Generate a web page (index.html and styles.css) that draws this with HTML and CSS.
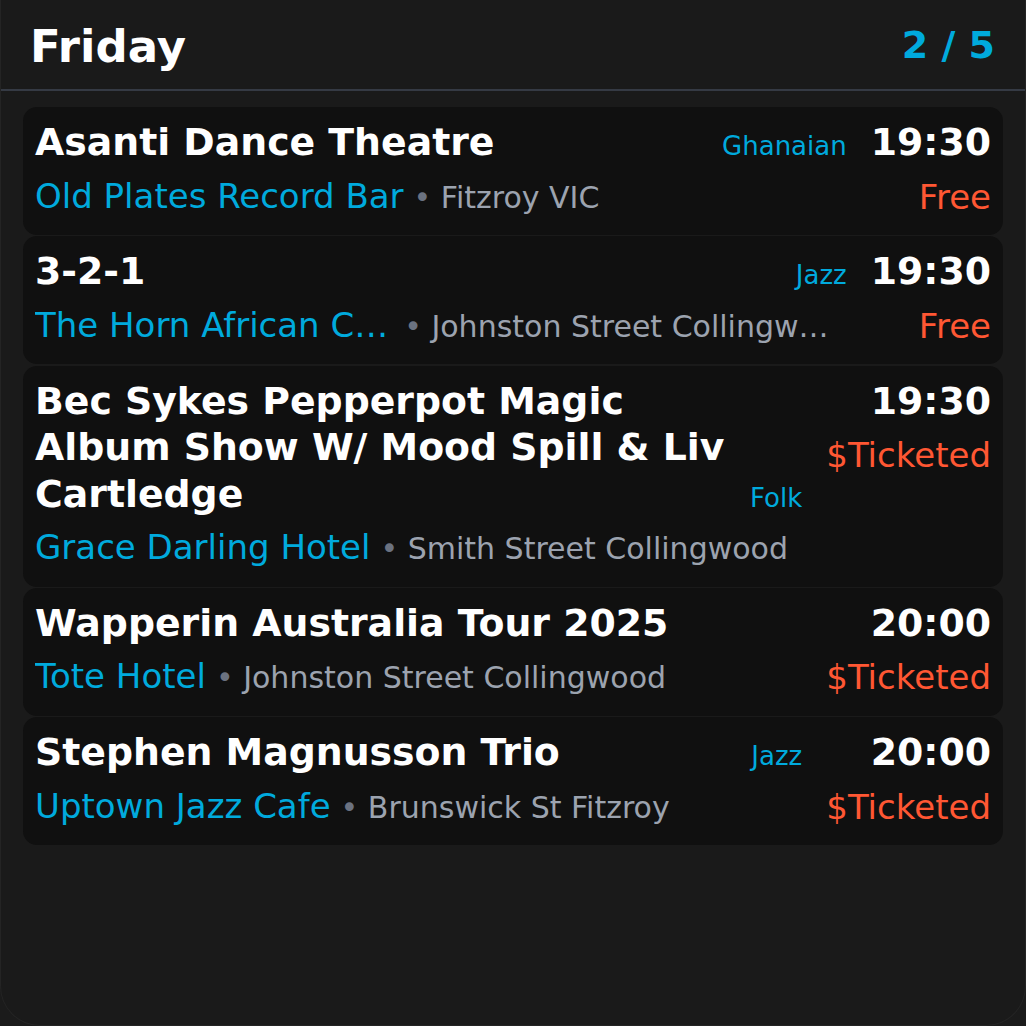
FILE: index.html
```html
<!DOCTYPE html>
<html lang="en">
<head>
<meta charset="utf-8">
<title>Friday</title>
<link rel="stylesheet" href="styles.css">
</head>
<body>
<div class="screen">
  <header class="header">
    <h1 class="day">Friday</h1>
    <div class="pager">2 / 5</div>
  </header>
  <main class="list">
    <article class="card">
      <div class="main">
        <div class="title-row">
          <h2 class="title">Asanti Dance Theatre</h2>
          <span class="genre">Ghanaian</span>
        </div>
        <div class="venue-row">
          <span class="venue">Old Plates Record Bar</span>
          <span class="loc"><span class="dot">•</span> Fitzroy VIC</span>
        </div>
      </div>
      <div class="side">
        <div class="time">19:30</div>
        <div class="price">Free</div>
      </div>
    </article>
    <article class="card">
      <div class="main">
        <div class="title-row">
          <h2 class="title">3-2-1</h2>
          <span class="genre">Jazz</span>
        </div>
        <div class="venue-row">
          <span class="venue">The Horn African Cafe</span>
          <span class="loc"><span class="dot">•</span> Johnston Street Collingwood</span>
        </div>
      </div>
      <div class="side">
        <div class="time">19:30</div>
        <div class="price">Free</div>
      </div>
    </article>
    <article class="card">
      <div class="main">
        <div class="title-row">
          <h2 class="title">Bec Sykes Pepperpot Magic Album Show W/ Mood Spill &amp; Liv Cartledge</h2>
          <span class="genre">Folk</span>
        </div>
        <div class="venue-row">
          <span class="venue">Grace Darling Hotel</span>
          <span class="loc"><span class="dot">•</span> Smith Street Collingwood</span>
        </div>
      </div>
      <div class="side">
        <div class="time">19:30</div>
        <div class="price">$Ticketed</div>
      </div>
    </article>
    <article class="card">
      <div class="main">
        <div class="title-row">
          <h2 class="title">Wapperin Australia Tour 2025</h2>
        </div>
        <div class="venue-row">
          <span class="venue">Tote Hotel</span>
          <span class="loc"><span class="dot">•</span> Johnston Street Collingwood</span>
        </div>
      </div>
      <div class="side">
        <div class="time">20:00</div>
        <div class="price">$Ticketed</div>
      </div>
    </article>
    <article class="card">
      <div class="main">
        <div class="title-row">
          <h2 class="title">Stephen Magnusson Trio</h2>
          <span class="genre">Jazz</span>
        </div>
        <div class="venue-row">
          <span class="venue">Uptown Jazz Cafe</span>
          <span class="loc"><span class="dot">•</span> Brunswick St Fitzroy</span>
        </div>
      </div>
      <div class="side">
        <div class="time">20:00</div>
        <div class="price">$Ticketed</div>
      </div>
    </article>
  </main>
</div>
</body>
</html>
```

FILE: styles.css
```css
* {
  box-sizing: border-box;
}

html, body {
  margin: 0;
  padding: 0;
  background: #1b1b1b;
}

body {
  font-family: "DejaVu Sans", "Liberation Sans", sans-serif;
  color: #ffffff;
}

.screen {
  height: 1026px;
  background: #1a1a1a;
  border: 1px solid #242424;
  border-top: none;
  border-radius: 0 0 40px 40px;
  overflow: hidden;
}

.header {
  height: 91px;
  display: flex;
  align-items: center;
  justify-content: space-between;
  padding: 0 30px 0 29px;
  border-bottom: 2px solid #353a44;
}

.day {
  margin: 0;
  font-size: 45px;
  font-weight: bold;
  line-height: 1;
  padding-top: 4px;
}

.pager {
  font-size: 38px;
  font-weight: bold;
  color: #00aadd;
  line-height: 1;
}

.list {
  display: flex;
  flex-direction: column;
  gap: 1.25px;
  padding: 16px 22px 0 22px;
}

.card {
  background: #101010;
  border-radius: 14px;
  padding: 12px 12px 18.5px 12px;
  display: flex;
  gap: 24px;
  align-items: flex-start;
}

.main {
  flex: 1;
  min-width: 0;
}

.title-row {
  display: flex;
  align-items: last baseline;
  gap: 12px;
}

.title {
  flex: 1;
  margin: 0;
  font-size: 37.8px;
  line-height: 46.5px;
  font-weight: bold;
}

.genre {
  font-size: 26px;
  line-height: 30px;
  color: #00aadd;
  white-space: nowrap;
}

.venue-row {
  display: flex;
  align-items: baseline;
  height: 42px;
  margin-top: 9px;
  padding-right: 9px;
  line-height: 42px;
  white-space: nowrap;
}

.venue {
  font-size: 34px;
  color: #00aadd;
  overflow: hidden;
  text-overflow: ellipsis;
  flex: 0 1 auto;
  min-width: 0;
}

.loc {
  font-size: 30px;
  color: #9ca3af;
  margin-left: 10px;
  overflow: hidden;
  text-overflow: ellipsis;
  flex: 0 1 auto;
  min-width: 0;
}

.dot {
  color: #6b7280;
}

.side {
  display: flex;
  flex-direction: column;
  align-items: flex-end;
}

.time {
  font-size: 37.8px;
  line-height: 46.5px;
  font-weight: bold;
}

.price {
  font-size: 34px;
  line-height: 38px;
  margin-top: 12px;
  color: #ff5733;
  white-space: nowrap;
}
```
